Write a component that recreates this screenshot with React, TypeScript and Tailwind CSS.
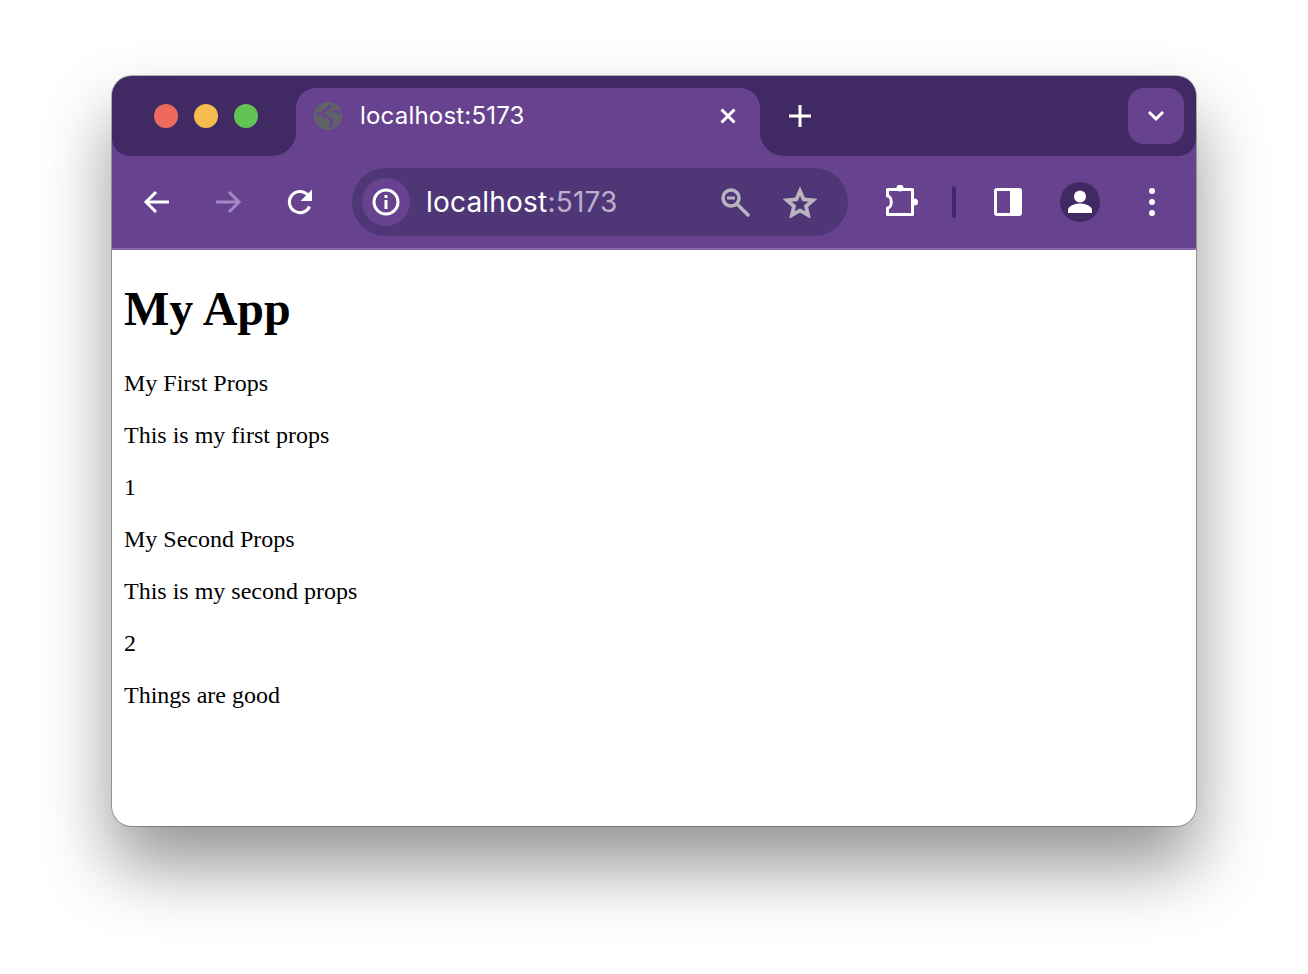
function BackIcon() {
  return (
    <svg width="28" height="28" viewBox="0 0 28 28" fill="none" aria-hidden>
      <path d="M27 14H4M14 4L4 14l10 10" stroke="currentColor" strokeWidth="3" />
    </svg>
  );
}

function ForwardIcon({ className }: { className?: string }) {
  return (
    <svg width="28" height="28" viewBox="0 0 28 28" fill="none" className={className} aria-hidden>
      <path d="M2 14h23M15 4l10 10-10 10" stroke="currentColor" strokeWidth="3" />
    </svg>
  );
}

function ReloadIcon() {
  return (
    <svg width="28" height="28" viewBox="0 0 28 28" fill="none" aria-hidden>
      <path d="M23.600 18.500A10.600 10.600 0 1 1 21.500 6.600L24 9" stroke="currentColor" strokeWidth="3" />
      <path d="M26 1.500V13H14.500z" fill="currentColor" />
    </svg>
  );
}

function Globe() {
  return (
    <svg width="28" height="28" viewBox="0 0 28 28" fill="none" aria-hidden>
      <circle cx="14" cy="14" r="14" fill="#5f6368" />
      <path
        d="M17 3c-1 4-5 3-6 6-1 2-6 2-8 4M8 14c4-1 6 1 9 3 2 1 1 5-1 8M19 10c2-1 5-1 7 1"
        stroke="#67438f"
        strokeWidth="3"
      />
    </svg>
  );
}

function ZoomOutIcon() {
  return (
    <svg width="32" height="32" viewBox="0 0 32 32" fill="none" aria-hidden>
      <circle cx="12" cy="12" r="8" stroke="currentColor" strokeWidth="3.500" />
      <path d="M8 12h8" stroke="currentColor" strokeWidth="3" />
      <path d="M17.500 17.500L30 30" stroke="currentColor" strokeWidth="3.500" />
    </svg>
  );
}

function StarIcon() {
  return (
    <svg width="34" height="32" viewBox="0 0 34 32" fill="none" aria-hidden>
      <path
        d="M17 5l3.700 8.400 9.300.8-7 6 2.100 8.900-8.100-4.700-8.100 4.700 2.100-8.900-7-6 9.300-.8z"
        stroke="currentColor"
        strokeWidth="3.800"
      />
    </svg>
  );
}

function PuzzleIcon() {
  return (
    <svg width="34" height="34" viewBox="0 0 34 34" fill="none" aria-hidden>
      <path
        d="M2.500 4.500H27.500V29.500H2.500V23c5 0 5-12 0-12z"
        stroke="currentColor"
        strokeWidth="3"
        strokeLinejoin="round"
      />
      <circle cx="15" cy="3" r="3.500" fill="currentColor" />
      <circle cx="29.500" cy="17" r="3.500" fill="currentColor" />
    </svg>
  );
}

function PanelIcon() {
  return (
    <svg width="28" height="28" viewBox="0 0 28 28" fill="none" aria-hidden>
      <rect x="1.500" y="1.500" width="25" height="25" rx="1.500" stroke="currentColor" strokeWidth="3" />
      <path d="M16 2h10v24H16z" fill="currentColor" />
    </svg>
  );
}

function AvatarIcon() {
  return (
    <svg width="40" height="40" viewBox="0 0 40 40" aria-hidden>
      <circle cx="20" cy="20" r="20" fill="#412a63" />
      <circle cx="20" cy="14.500" r="6" fill="white" />
      <path d="M8 31v-3c0-4 7-6.500 12-6.500S32 24 32 28v3z" fill="white" />
    </svg>
  );
}

function ToolbarSlot({ width, children }: { width: string; children: React.ReactNode }) {
  return <div className={`flex h-full shrink-0 items-center justify-center ${width}`}>{children}</div>;
}

function Light({ color }: { color: string }) {
  return <span className={`h-6 w-6 rounded-full ${color}`} />;
}

function TabStrip() {
  return (
    <div className="flex h-20 shrink-0 bg-[#67438f] font-['Inter',sans-serif] text-white">
      {/* traffic lights */}
      <div className="flex w-[184px] shrink-0 items-center gap-4 rounded-bl-[18px] rounded-br-[24px] bg-[#412a63] pl-[42px]">
        <Light color="bg-[#ee6a5f]" />
        <Light color="bg-[#f5bd4f]" />
        <Light color="bg-[#61c454]" />
      </div>

      <div className="w-[464px] shrink-0 bg-[#412a63] pt-3">
        <div className="flex h-full items-center rounded-t-[20px] bg-[#67438f] pb-[12px] pl-[18px] pr-[20px]">
          <Globe />
          <span className="ml-[18px] text-[24px] leading-[32px] tracking-[0.2px]">localhost:5173</span>
          <svg width="16" height="16" viewBox="0 0 16 16" fill="none" className="ml-auto mr-[4px]" aria-hidden>
            <path d="M1.500 1.500l13 13M14.500 1.500l-13 13" stroke="currentColor" strokeWidth="3" />
          </svg>
        </div>
      </div>

      <div className="flex flex-1 rounded-bl-[24px] rounded-br-[18px] bg-[#412a63] pr-3 pt-3">
        <div className="ml-[29px] flex h-14 items-center">
          <svg width="22" height="22" viewBox="0 0 22 22" fill="none" aria-hidden>
            <path d="M11 0v22M0 11h22" stroke="currentColor" strokeWidth="3" />
          </svg>
        </div>
        <div className="ml-auto flex h-14 w-14 items-center justify-center rounded-[16px] bg-[#67438f]">
          <svg width="18" height="12" viewBox="0 0 18 12" fill="none" aria-hidden>
            <path d="M2 2l7 7 7-7" stroke="currentColor" strokeWidth="3" />
          </svg>
        </div>
      </div>
    </div>
  );
}

function Toolbar() {
  return (
    <div className="flex h-[94px] shrink-0 items-center border-b-2 border-[#8a69b0] bg-[#67438f] pl-2 font-['Inter',sans-serif] text-white">
      <ToolbarSlot width="w-[72px]"><BackIcon /></ToolbarSlot>
      <ToolbarSlot width="w-[72px]"><ForwardIcon className="text-[#a48ac2]" /></ToolbarSlot>
      <ToolbarSlot width="w-[72px]"><ReloadIcon /></ToolbarSlot>

      <div className="ml-4 flex h-[68px] w-[496px] shrink-0 items-center rounded-full bg-[#4f3677] pl-[10px]">
        <div className="flex h-12 w-12 shrink-0 items-center justify-center rounded-full bg-[#67438f]">
          <svg width="28" height="28" viewBox="0 0 28 28" fill="none" aria-hidden>
            <circle cx="14" cy="14" r="12" stroke="currentColor" strokeWidth="3" />
            <path d="M14 12v9M14 7v3" stroke="currentColor" strokeWidth="3" />
          </svg>
        </div>
        <span className="ml-4 text-[28px] leading-9 tracking-[0.2px]">
          localhost<span className="text-[#bdb0ce]">:5173</span>
        </span>
        <div className="ml-auto flex items-center gap-8 pr-[31px] text-[#b9b5bf]">
          <ZoomOutIcon />
          <StarIcon />
        </div>
      </div>

      <ToolbarSlot width="w-[104px] pl-1"><PuzzleIcon /></ToolbarSlot>
      <div className="h-8 w-1 shrink-0 rounded-full bg-[#412a63]" />
      <ToolbarSlot width="w-[104px]"><PanelIcon /></ToolbarSlot>
      <ToolbarSlot width="w-10"><AvatarIcon /></ToolbarSlot>
      <div className="ml-[49px] flex shrink-0 flex-col gap-[5px]">
        <span className="h-[6px] w-[6px] rounded-full bg-white" />
        <span className="h-[6px] w-[6px] rounded-full bg-white" />
        <span className="h-[6px] w-[6px] rounded-full bg-white" />
      </div>
    </div>
  );
}

const LINES = [
  "My First Props",
  "This is my first props",
  "1",
  "My Second Props",
  "This is my second props",
  "2",
  "Things are good",
];

export default function App() {
  return (
    <div className="h-[974px] overflow-hidden bg-white pl-[112px] pt-[76px]">
      <div className="flex h-[750px] w-[1084px] flex-col overflow-hidden rounded-[20px] bg-white shadow-[0_0_0_1px_rgba(0,0,0,0.28),0_40px_70px_rgba(0,0,0,0.42)]">
        <TabStrip />
        <Toolbar />
        <main className="flex-1 px-3 font-['Liberation_Serif',serif] text-black">
          <h1 className="mb-[33px] mt-[31px] text-[48px] font-bold leading-[55px]">My App</h1>
          {LINES.map((line) => (
            <p key={line} className="mb-6 text-[24px] leading-[28px]">
              {line}
            </p>
          ))}
        </main>
      </div>
    </div>
  );
}
